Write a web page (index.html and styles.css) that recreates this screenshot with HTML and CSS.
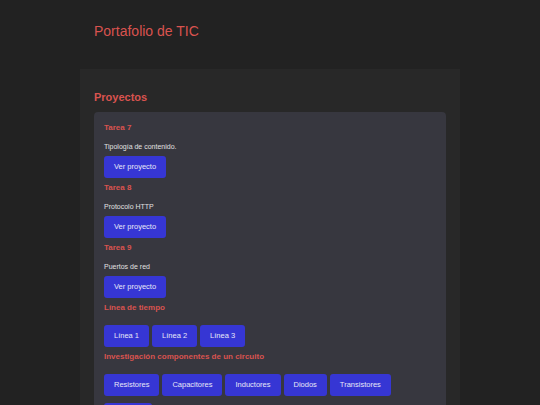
FILE: index.html
```html
<!DOCTYPE html>
<html lang="es">
<head>
<meta charset="utf-8">
<title>Portafolio de TIC</title>
<link rel="stylesheet" href="styles.css">
</head>
<body>
<header class="site-header">
  <h1 class="site-title">Portafolio de TIC</h1>
</header>
<main class="main">
  <h2 class="section-title">Proyectos</h2>
  <div class="card">
    <h3 class="item-title">Tarea 7</h3>
    <p class="item-text">Tipología de contenido.</p>
    <div class="btn-row"><a class="btn" href="#">Ver proyecto</a></div>

    <h3 class="item-title">Tarea 8</h3>
    <p class="item-text">Protocolo HTTP</p>
    <div class="btn-row"><a class="btn" href="#">Ver proyecto</a></div>

    <h3 class="item-title">Tarea 9</h3>
    <p class="item-text">Puertos de red</p>
    <div class="btn-row"><a class="btn" href="#">Ver proyecto</a></div>

    <h3 class="item-title">Línea de tiempo</h3>
    <div class="btn-row btn-row-spaced">
      <a class="btn" href="#">Línea 1</a>
      <a class="btn" href="#">Línea 2</a>
      <a class="btn" href="#">Línea 3</a>
    </div>

    <h3 class="item-title">Investigación componentes de un circuito</h3>
    <div class="btn-row btn-row-spaced">
      <a class="btn" href="#">Resistores</a>
      <a class="btn" href="#">Capacitores</a>
      <a class="btn" href="#">Inductores</a>
      <a class="btn" href="#">Diodos</a>
      <a class="btn" href="#">Transistores</a>
      <a class="btn" href="#">Fusibles</a>
    </div>
  </div>
</main>
</body>
</html>
```
FILE: styles.css
```css
* { box-sizing: border-box; }

html, body {
  margin: 0;
  padding: 0;
  background: #222222;
  font-family: "Liberation Sans", Arial, sans-serif;
  color: #e0e0e0;
}

.site-header {
  width: 380px;
  margin: 0 auto;
  padding: 23px 14px 0;
  height: 69px;
}

.site-title {
  margin: 0;
  font-size: 14px;
  line-height: 17px;
  font-weight: normal;
  color: #d9534f;
}

.main {
  width: 380px;
  margin: 0 auto;
  background: #282828;
  padding: 21px 14px 20px;
  min-height: 400px;
}

.section-title {
  margin: 0 0 8px;
  font-size: 11px;
  line-height: 14px;
  font-weight: bold;
  color: #d9534f;
}

.card {
  background: #37373f;
  border-radius: 4px;
  padding: 10px 10px 10px;
}

.item-title {
  margin: 4px 0 0;
  font-size: 8px;
  line-height: 12px;
  font-weight: bold;
  color: #d9534f;
}

.item-title:first-child { margin-top: 0; }

.item-text {
  margin: 7px 0 3px;
  font-size: 7px;
  line-height: 12px;
  color: #e0e0e0;
}

.btn-row {
  display: flex;
  flex-wrap: wrap;
  column-gap: 3px;
  row-gap: 7px;
}

.btn-row-spaced { margin-top: 11px; }

.btn {
  display: inline-block;
  height: 22px;
  line-height: 22px;
  padding: 0 10px;
  background: #3636d4;
  color: #e8e8f8;
  border-radius: 3px;
  font-size: 7.5px;
  text-decoration: none;
}
```
